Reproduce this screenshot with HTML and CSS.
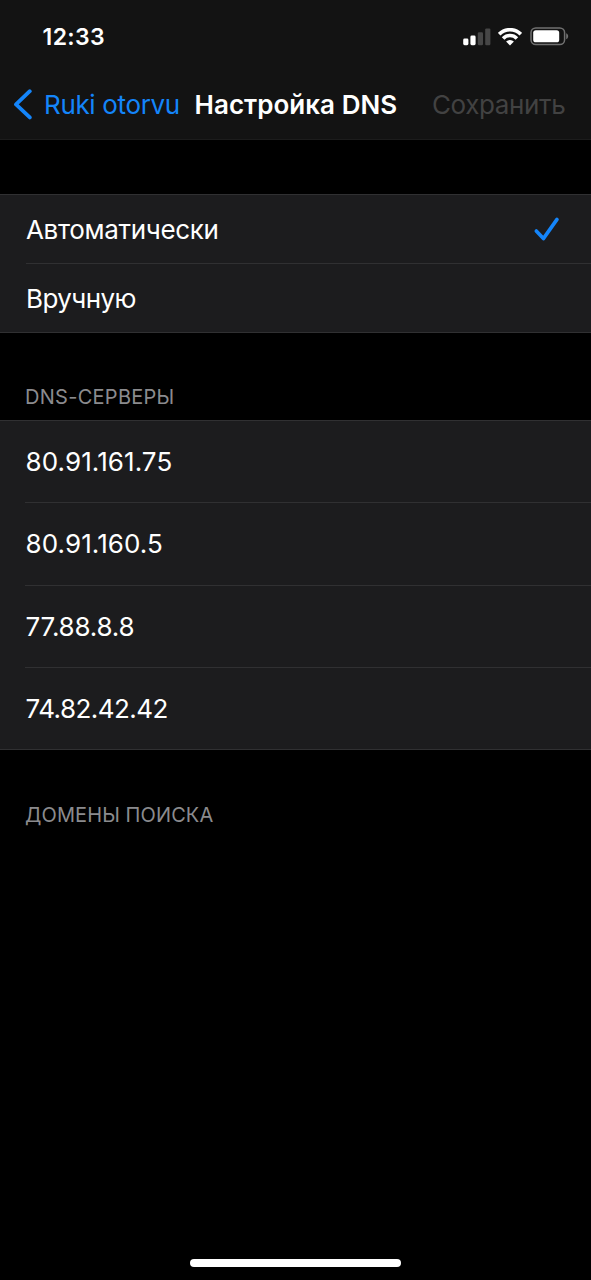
FILE: index.html
```html
<!DOCTYPE html>
<html lang="ru">
<head>
<meta charset="utf-8">
<title>Настройка DNS</title>
<link rel="stylesheet" href="styles.css">
</head>
<body>
<div class="screen">
  <header class="header">
    <div class="status">
      <span class="time">12:33</span>
      <span class="indicators">
        <svg class="signal" width="28" height="18" viewBox="0 0 28 18">
          <rect x="0.2" y="10.6" width="5.2" height="6.6" rx="1.4" fill="#fff"/>
          <rect x="7.4" y="7.6" width="5.2" height="9.6" rx="1.4" fill="#fff"/>
          <rect x="14.8" y="4.2" width="5.2" height="13" rx="1.2" fill="#464646"/>
          <rect x="22.2" y="0.4" width="5.2" height="16.8" rx="1.2" fill="#464646"/>
        </svg>
        <svg class="wifi" width="24" height="18" viewBox="0 0 24 18">
          <g fill="none" stroke="#fff" stroke-width="3.6">
            <path d="M1.2 6.1a15.4 15.4 0 0 1 21.6 0"/>
            <path d="M5.1 10.4a9.6 9.6 0 0 1 13.8 0"/>
          </g>
          <path d="M8.1 13.6a5.4 5.4 0 0 1 7.8 0L12 17.6z" fill="#fff"/>
        </svg>
        <svg class="battery" width="39" height="19" viewBox="0 0 39 19">
          <rect x="1" y="0.9" width="33.6" height="16.7" rx="4.8" fill="none" stroke="#707070" stroke-width="1.5"/>
          <rect x="3.2" y="3.2" width="26" height="12.1" rx="2.6" fill="#fff"/>
          <path d="M36.2 6.2c2.6 1 2.6 5 0 6z" fill="#707070"/>
        </svg>
      </span>
    </div>
    <nav class="nav">
      <svg class="chevron" width="20" height="32" viewBox="0 0 20 32"><path d="M17.8 2.2 4 15.4l13.8 13" fill="none" stroke="#1485fa" stroke-width="3.8" stroke-linecap="round" stroke-linejoin="round"/></svg>
      <span class="back">Ruki otorvu</span>
      <h1 class="title">Настройка DNS</h1>
      <span class="save">Сохранить</span>
    </nav>
  </header>
  <main>
    <section class="group modes">
      <div class="row"><span class="auto">Автоматически</span>
        <svg class="check" width="28" height="28" viewBox="0 0 28 28"><path d="M4.3 15 11.4 22.6 25 3.4" fill="none" stroke="#1485fa" stroke-width="3.6" stroke-linecap="round" stroke-linejoin="round"/></svg>
      </div>
      <div class="row"><span class="manual">Вручную</span></div>
    </section>
    <h2 class="caption">DNS-СЕРВЕРЫ</h2>
    <section class="group servers">
      <div class="row">80.91.161.75</div>
      <div class="row">80.91.160.5</div>
      <div class="row tight">77.88.8.8</div>
      <div class="row tighter">74.82.42.42</div>
    </section>
    <h2 class="caption domains">ДОМЕНЫ ПОИСКА</h2>
  </main>
  <footer class="home"><div class="home-bar"></div></footer>
</div>
</body>
</html>
```
FILE: styles.css
```css
* { box-sizing: border-box; }
body { margin: 0; background: #000; }
.screen {
  width: 591px;
  height: 1280px;
  display: flex;
  flex-direction: column;
  overflow: hidden;
  background: #000;
  color: #fff;
  font-family: Inter, "Liberation Sans", sans-serif;
  font-size: 26px;
  line-height: 32px;
}
.header { height: 140px; background: #131313; border-bottom: 1px solid #1c1c1c; }
.status {
  height: 70px;
  display: flex;
  justify-content: space-between;
  align-items: center;
  padding: 3px 22px 0 42.5px;
}
.time { font-size: 23px; font-weight: 600; letter-spacing: 0.4px; }
.indicators { display: flex; align-items: center; }
.wifi { margin-left: 7px; }
.battery { margin-left: 8px; }
.nav {
  height: 69px;
  display: flex;
  align-items: center;
  padding-left: 12px;
  white-space: nowrap;
}
.back { margin-left: 12px; width: 150.5px; color: #1485fa; letter-spacing: -0.34px; }
.title { margin: 0; width: 237.5px; font-size: 26px; font-weight: 600; line-height: 32px; letter-spacing: 0.03px; }
.save { color: #424242; letter-spacing: -0.38px; }
.group {
  background: #1c1c1e;
  border: solid #303032;
  border-width: 1px 0;
  padding-left: 26px;
}
.modes { margin-top: 54px; height: 139px; }
.row {
  display: flex;
  align-items: center;
  justify-content: space-between;
  padding-right: 31px;
}
.row + .row { border-top: 1px solid #303032; }
.modes .row { height: 68px; padding-top: 2px; }
.modes .row + .row { height: 69px; }
.auto { letter-spacing: -0.33px; }
.manual { letter-spacing: -0.55px; }
.caption {
  margin: 54px 0 0;
  padding: 0 0 10px 25px;
  height: 33px;
  font-size: 20px;
  font-weight: 400;
  line-height: 20px;
  color: #8b8b8e;
  letter-spacing: 0.28px;
}
.domains { margin-top: 55px; letter-spacing: 0.1px; }
.servers { height: 330px; }
.servers .row { height: 82.5px; letter-spacing: 0.08px; margin-left: -1px; padding-left: 0.6px; }
.servers .row:first-child { height: 81px; }
.servers .tight { letter-spacing: -0.2px; padding-top: 1px; }
.servers .tighter { letter-spacing: -0.55px; }
.home { margin-top: auto; height: 21px; }
.home-bar { width: 211px; height: 8px; margin-left: 190px; border-radius: 4px; background: #fff; }
```
